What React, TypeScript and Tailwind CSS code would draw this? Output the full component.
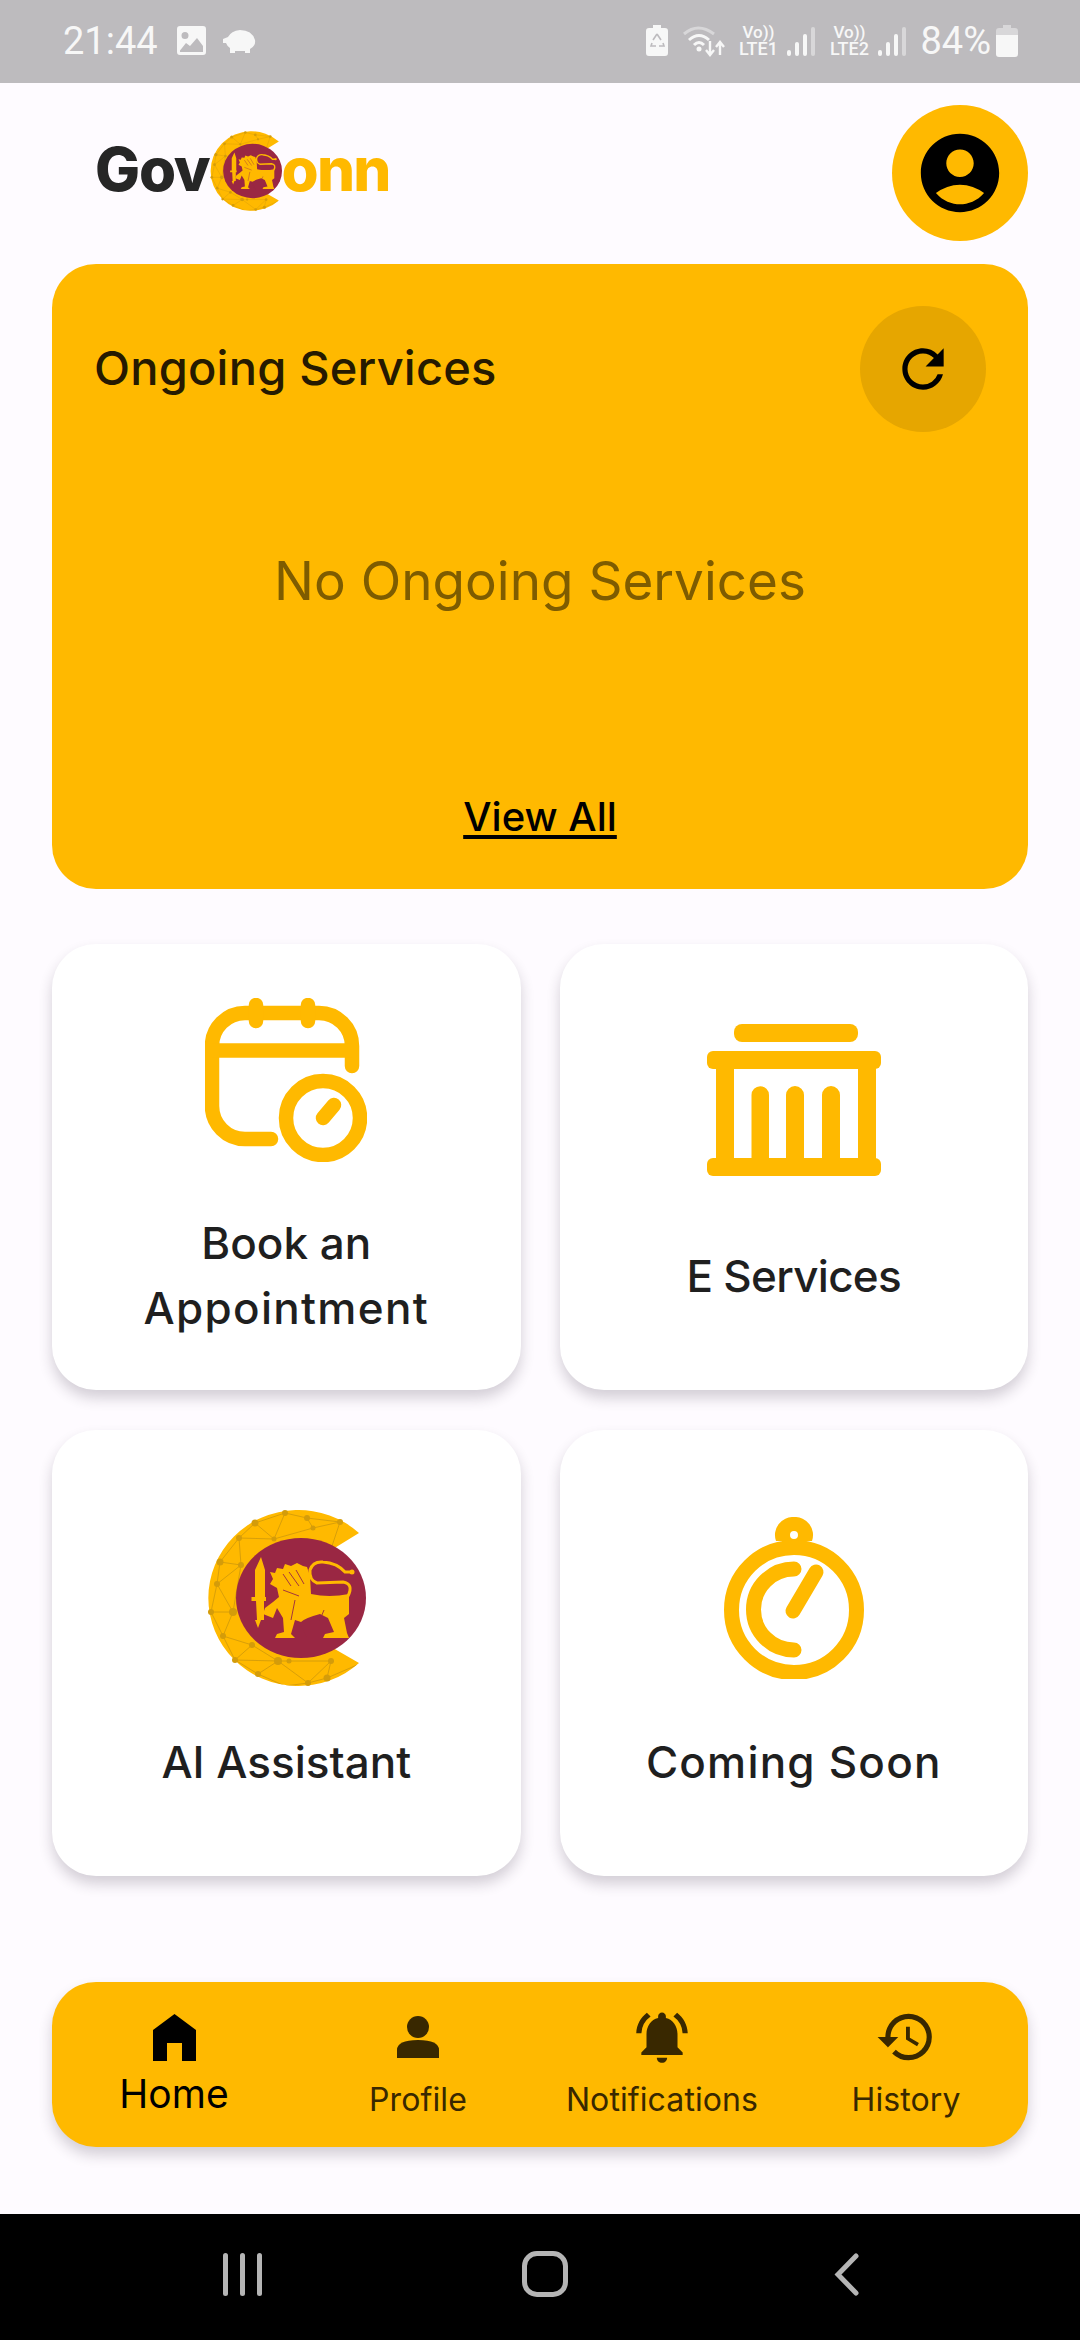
import { MdAccountCircle, MdHistory, MdNotificationsActive, MdRefresh } from 'react-icons/md';

// Crest used in the header logo and on the AI Assistant card.
function Crest({ className }: { className: string }) {
  const dots: [number, number, number][] = [
    [78, 3, 3], [100, 8, 3], [133, 12, 3], [48, 13, 3.5], [32, 28, 3], [106, 18, 2.5], [13, 52, 3.5], [34, 55, 3],
    [10, 74, 3], [4, 102, 3], [26, 102, 4], [16, 126, 3], [45, 135, 3], [28, 150, 3], [71, 151, 4], [82, 151, 2.5],
    [124, 151, 3], [51, 164, 3], [120, 168, 3.5], [101, 173, 3], [67, 29, 2.5],
  ];
  return (
    <svg viewBox="0 0 159 176" className={className}>
      <defs>
        <clipPath id="crest-ring">
          <path d="M152 23L126 39V138L152 153A90 88 0 1 1 152 23Z" />
        </clipPath>
      </defs>
      <path d="M152 23L126 39V138L152 153A90 88 0 1 1 152 23Z" fill="#ffb900" />
      <g clipPath="url(#crest-ring)" stroke="#d49c0a" strokeWidth="0.9" fill="none">
        <path d="M78 3L100 8L133 12L106 18L100 8M78 3L48 13L32 28L13 52L10 74L4 102L16 126L28 150L51 164L78 176L101 173L120 168L124 151L82 151L71 151L51 164M48 13L67 29L78 3M32 28L67 29L106 18M32 28L34 55L13 52M34 55L10 74L26 102L4 102M26 102L16 126L45 135L28 150M45 135L71 151L28 150M71 151L101 173M124 151L101 173M133 12L125 36M34 55L26 102M120 168L150 155" />
      </g>
      <g fill="#d49c0a">
        {dots.map(([cx, cy, r]) => (
          <circle key={`${cx}-${cy}`} cx={cx} cy={cy} r={r} />
        ))}
      </g>
      <ellipse cx="94" cy="88" rx="65" ry="60" fill="#9a2743" />
      <g fill="#ffb900">
        <path d="M54 47L58 60V87H48V60ZM44.5 87H59V91H44.5ZM49 91H57V110H54L51 118L48 110H50Z" />
        <path d="M63 62L68 63L70 58L76 59L78 54L84 56L90 53L96 56L100 57L103 66L104 84Q122 88 142 84L142 104L137 108L140 123L142 128L116 128L118 124L127 122L121 108L113 104Q98 108 94 112L88 110L84 124L88 128L68 128L70 124L77 122L76 108L70 98L66 108L56 104L58 98L66 92L72 87L70 78L63 74L66 69Z" />
        <circle cx="145" cy="62" r="2.5" />
      </g>
      <path d="M141 86Q147 74 136 72L110 73Q102 70 103 60Q106 51 116 52Q130 53 138 62L144 62" fill="none" stroke="#ffb900" strokeWidth="3" />
      <path d="M112 58Q116 55 120 58M122 57Q126 55 129 59M76 64L84 76M82 62L92 76M89 60L97 74M76 80L92 86" fill="none" stroke="#9a2743" strokeWidth="0.9" />
      <path d="M92 112L100 128M117 100L112 112M88 90L84 110" fill="none" stroke="#9a2743" strokeWidth="0.9" />
    </svg>
  );
}

function StatusBar() {
  return (
    <div className="flex h-[83px] shrink-0 items-center justify-between bg-[#bdbbbe] pb-[2px] pl-[63px] pr-[62px] text-[#f7f7f7] [font-family:Roboto,sans-serif]">
      <div className="flex items-center">
        <span className="text-[38px] leading-none">21:44</span>
        <svg viewBox="0 0 29 29" className="ml-[19px] h-[29px] w-[29px]" fill="#f7f7f7">
          <path fillRule="evenodd" d="M3 0H26A3 3 0 0 1 29 3V26A3 3 0 0 1 26 29H3A3 3 0 0 1 0 26V3A3 3 0 0 1 3 0ZM8 6A3.5 3.5 0 1 0 8 13A3.5 3.5 0 1 0 8 6ZM3 24.5L3 26H26V20L20 12L13 20L9 17Z" />
        </svg>
        <svg viewBox="0 0 34 26" className="ml-[16px] h-[26px] w-[34px]" fill="#f7f7f7">
          <path d="M1 11L6 9Q9 3 18 2Q30 2 33 12Q34 18 28 21V25H23V23H13V25H8V20Q5 18 4 15H1Z" />
        </svg>
      </div>
      <div className="flex items-center">
        <svg viewBox="0 0 22 31" className="h-[31px] w-[22px]">
          <path d="M7 0H15V3H19A3 3 0 0 1 22 6V28A3 3 0 0 1 19 31H3A3 3 0 0 1 0 28V6A3 3 0 0 1 3 3H7Z" fill="#f7f7f7" />
          <path d="M11 9L7 15M11 9L15 15M6 18L5 21H10M17 18L18 21H13" stroke="#bdbbbe" strokeWidth="1.6" fill="none" />
        </svg>
        <svg viewBox="0 0 42 32" className="ml-[15px] h-[32px] w-[42px]" fill="none">
          <path d="M1 9Q15 -3 31 9" stroke="#d8d7d9" strokeWidth="3" />
          <path d="M6 15Q16 6 26 15M11 20Q16 15 21 20" stroke="#f7f7f7" strokeWidth="3" />
          <circle cx="16" cy="24" r="2.5" fill="#f7f7f7" />
          <path d="M27 16V29M23 25L27 30L31 25M37 30V18M33 22L37 17L41 22" stroke="#f7f7f7" strokeWidth="2.4" />
        </svg>
        <Lte label="LTE1" className="ml-[13px]" />
        <Signal />
        <Lte label="LTE2" className="ml-[14px]" />
        <Signal />
        <span className="ml-[14px] text-[38px] leading-none">84%</span>
        <svg viewBox="0 0 22 32" className="ml-[5px] h-[32px] w-[22px]">
          <path d="M7 0H15V3H19A3 3 0 0 1 22 6V10H0V6A3 3 0 0 1 3 3H7Z" fill="#d8d7d9" />
          <path d="M0 10H22V29A3 3 0 0 1 19 32H3A3 3 0 0 1 0 29Z" fill="#f7f7f7" />
        </svg>
      </div>
    </div>
  );
}

function Lte({ label, className }: { label: string; className: string }) {
  return (
    <div className={`flex w-[40px] flex-col items-center text-[#f7f7f7] ${className}`}>
      <span className="text-[17px] font-medium leading-[16px]">Vo))</span>
      <span className="text-[18px] font-medium leading-[17px]">{label}</span>
    </div>
  );
}

function Signal() {
  return (
    <div className="ml-[9px] flex h-[30px] items-end gap-[4px]">
      <div className="h-[6px] w-[4px] rounded-sm bg-[#f7f7f7]" />
      <div className="h-[14px] w-[4px] rounded-sm bg-[#f7f7f7]" />
      <div className="h-[22px] w-[4px] rounded-sm bg-[#f7f7f7]" />
      <div className="h-[29px] w-[4px] rounded-sm bg-[#d8d7d9]" />
    </div>
  );
}

function CalendarIcon() {
  return (
    <svg viewBox="0 0 162 164" className="h-[164px] w-[162px]" fill="none" stroke="#ffb900" strokeWidth="14.5" strokeLinecap="round">
      <path d="M66 141H40A33 33 0 0 1 7 108V48A33 33 0 0 1 40 15H114A33 33 0 0 1 147 48V68" />
      <path d="M7 52.5H147" strokeLinecap="butt" />
      <path d="M51 7V23M103 7V23" />
      <circle cx="118" cy="120" r="37" />
      <path d="M129 107L118 120" />
    </svg>
  );
}

function BankIcon() {
  return (
    <svg viewBox="0 0 174 152" className="h-[152px] w-[174px]" fill="#ffb900">
      <rect x="27" y="0" width="124" height="18" rx="8" />
      <rect x="0" y="27" width="174" height="18" rx="6" />
      <rect x="0" y="134" width="174" height="18" rx="6" />
      <rect x="9" y="40" width="18" height="100" />
      <rect x="151" y="40" width="18" height="100" />
      <path d="M44.5 140V71A8.75 8.75 0 0 1 62 71V140ZM79 140V71A9 9 0 0 1 97 71V140ZM115 140V71A9 9 0 0 1 133 71V140Z" />
    </svg>
  );
}

function TimerIcon() {
  return (
    <svg viewBox="0 0 140 162" className="h-[162px] w-[140px]" fill="none" stroke="#ffb900">
      <path fillRule="evenodd" stroke="none" fill="#ffb900" d="M70 0A18 18 0 0 1 88 24H52A18 18 0 0 1 70 0ZM70 14A4 4 0 1 0 70 22A4 4 0 1 0 70 14Z" />
      <circle cx="70" cy="93" r="62.5" strokeWidth="15" />
      <path d="M70 52A40.5 40.5 0 0 0 70 133" strokeWidth="15" strokeLinecap="round" />
      <path d="M92 55L69 94" strokeWidth="15" strokeLinecap="round" />
    </svg>
  );
}

function ServiceCard({ icon, label, iconGap }: { icon: React.ReactNode; label: React.ReactNode; iconGap: string }) {
  return (
    <div className="flex h-[446px] flex-col items-center rounded-[44px] bg-white pt-[52px] shadow-[0_8px_14px_rgba(40,30,50,0.2)]">
      <div className={`flex items-center justify-center ${iconGap}`}>{icon}</div>
      <div className="text-center text-[44px] font-medium leading-[65px] text-[#1f1f1f]">{label}</div>
    </div>
  );
}

function NavItem({ icon, label, active }: { icon: React.ReactNode; label: string; active?: boolean }) {
  return (
    <div className={`flex w-[244px] flex-col items-center ${active ? 'text-black' : 'text-[#392800]'}`}>
      <div className="flex h-[62px] items-center justify-center">{icon}</div>
      {active ? (
        <span className="mt-[4px] text-[39px] leading-[44px]">{label}</span>
      ) : (
        <span className="mt-[10px] text-[32px] tracking-[0.1px] leading-[44px]">{label}</span>
      )}
    </div>
  );
}

export default function App() {
  return (
    <div className="flex h-[2340px] w-[1080px] flex-col overflow-hidden bg-[#fefbff] [font-family:Inter,sans-serif]">
      <StatusBar />

      {/* Header */}
      <div className="flex items-center justify-between pl-[95px] pr-[52px] pt-[22px]">
        <div className="flex items-center pb-[4px]">
          <span className="-mt-[4px] text-[60px] font-extrabold leading-none tracking-[-1.2px] text-[#262626]">Gov</span>
          <Crest className="h-[80px] w-[72px]" />
          <span className="-mt-[4px] text-[60px] font-extrabold leading-none tracking-[-1.8px] text-[#ffb900]">onn</span>
        </div>
        <div className="flex h-[136px] w-[136px] items-center justify-center rounded-full bg-[#ffb900]">
          <MdAccountCircle className="h-[94px] w-[94px] text-black" />
        </div>
      </div>

      <div className="mt-[23px] px-[52px]">
        {/* Ongoing services */}
        <div className="flex h-[625px] flex-col rounded-[44px] bg-[#ffb900] pl-[42px] pr-[42px] pt-[42px]">
          <div className="flex items-center justify-between">
            <span className="-mt-[2px] text-[47px] font-medium tracking-[0.2px] text-[#261a00]">Ongoing Services</span>
            <div className="flex h-[126px] w-[126px] items-center justify-center rounded-full bg-[#e6a600]">
              <MdRefresh className="h-[62px] w-[62px] text-black" />
            </div>
          </div>
          <div className="mt-[119px] text-center text-[53px] leading-[60px] text-[#7e5c00]">No Ongoing Services</div>
          <div className="mt-[176px] text-center text-[40px] font-medium leading-[60px] text-black underline underline-offset-[4px]">View All</div>
        </div>

        {/* Service tiles */}
        <div className="mt-[55px] grid grid-cols-2 gap-x-[39px] gap-y-[40px]">
          <ServiceCard
            icon={<CalendarIcon />}
            label={<>Book an<br /><span className="tracking-[1.3px]">Appointment</span></>}
            iconGap="mb-[49px] mt-[2px] h-[164px]"
          />
          <ServiceCard icon={<BankIcon />} label={<span className="tracking-[-0.7px]">E Services</span>} iconGap="mb-[46px] mt-[6px] h-[196px]" />
          <ServiceCard icon={<Crest className="h-[176px] w-[159px]" />} label="AI Assistant" iconGap="mb-[44px] mt-[28px] h-[176px]" />
          <ServiceCard icon={<TimerIcon />} label={<span className="tracking-[1.2px]">Coming Soon</span>} iconGap="mb-[44px] mt-[28px] h-[176px]" />
        </div>

        {/* Bottom navigation */}
        <div className="mt-[106px] flex h-[165px] items-start rounded-[44px] bg-[#ffb900] pt-[24px] shadow-[0_8px_14px_rgba(40,30,50,0.2)]">
          <NavItem
            active
            label="Home"
            icon={
              <svg viewBox="0 0 43 47" className="h-[47px] w-[43px]" fill="#000000">
                <path d="M21.5 0L43 16V47H29V29H14V47H0V16Z" />
              </svg>
            }
          />
          <NavItem
            label="Profile"
            icon={
              <svg viewBox="0 0 42 42" className="h-[42px] w-[42px]" fill="#392800">
                <ellipse cx="21" cy="11" rx="11" ry="11" />
                <path d="M0 42V34Q0 24 21 24Q42 24 42 34V42Z" />
              </svg>
            }
          />
          <NavItem label="Notifications" icon={<MdNotificationsActive className="h-[62px] w-[62px]" />} />
          <NavItem label="History" icon={<MdHistory className="h-[62px] w-[62px]" />} />
        </div>
      </div>

      {/* Android nav bar */}
      <div className="mt-auto flex h-[126px] shrink-0 items-center bg-black pb-[6px]">
        <div className="ml-[223px] flex gap-[12px]">
          <div className="h-[43px] w-[5px] rounded-full bg-[#b5b5b5]" />
          <div className="h-[43px] w-[5px] rounded-full bg-[#b5b5b5]" />
          <div className="h-[43px] w-[5px] rounded-full bg-[#b5b5b5]" />
        </div>
        <div className="ml-[260px] h-[46px] w-[46px] rounded-[15px] border-[5px] border-[#b5b5b5]" />
        <svg viewBox="0 0 25 43" className="ml-[266px] h-[43px] w-[25px]" fill="none" stroke="#b5b5b5" strokeWidth="5" strokeLinecap="round">
          <path d="M22 3L4 21.5L22 40" />
        </svg>
      </div>
    </div>
  );
}
